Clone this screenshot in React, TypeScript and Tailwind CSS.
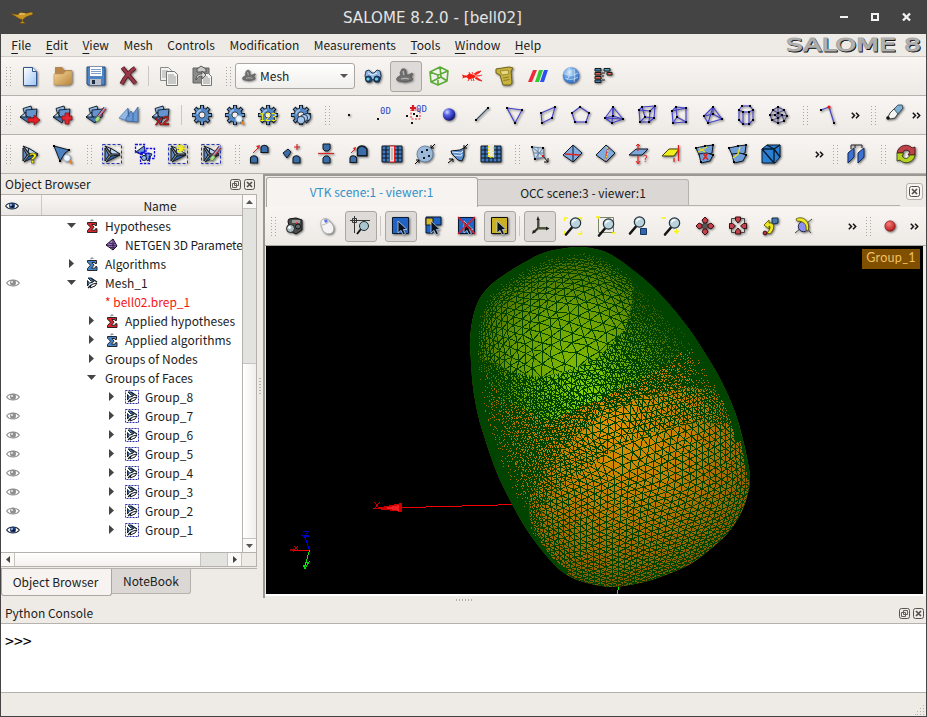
import React from "react";
import type { ReactNode } from "react";

/* ---------- icon primitives (20 x 20 user units) ---------- */

function Ico({ children, shadow = true }: { children: ReactNode; shadow?: boolean }) {
  return (
    <svg
      width="20"
      height="20"
      viewBox="0 0 20 20"
      className={shadow ? "shrink-0 overflow-visible drop-shadow-[1px_1px_1px_rgba(0,0,0,0.55)]" : "shrink-0 overflow-visible"}
      fill="none"
    >
      {children}
    </svg>
  );
}

function Defs() {
  return (
    <svg className="absolute h-0 w-0" aria-hidden="true">
      <defs>
        <linearGradient id="page" x1="0" y1="0" x2="1" y2="1">
          <stop offset="0" stopColor="#ffffff" />
          <stop offset="1" stopColor="#9fc6f3" />
        </linearGradient>
        <linearGradient id="gold" x1="0" y1="0" x2="1" y2="1">
          <stop offset="0" stopColor="#f6d79a" />
          <stop offset="1" stopColor="#b9843a" />
        </linearGradient>
        <radialGradient id="ball" cx=".35" cy=".3" r=".7">
          <stop offset="0" stopColor="#d4dcff" />
          <stop offset=".4" stopColor="#5560e8" />
          <stop offset="1" stopColor="#15157c" />
        </radialGradient>
        <radialGradient id="globe" cx=".4" cy=".3" r=".75">
          <stop offset="0" stopColor="#e0f2ff" />
          <stop offset=".5" stopColor="#5c98dc" />
          <stop offset="1" stopColor="#2c62b4" />
        </radialGradient>
        <radialGradient id="redball" cx=".4" cy=".3" r=".7">
          <stop offset="0" stopColor="#ff7a7a" />
          <stop offset="1" stopColor="#b41c1c" />
        </radialGradient>
      </defs>
    </svg>
  );
}

const K = "#101820";

const MeshBase = () => (
  <g stroke={K} strokeWidth=".9" fill="#6a9bd6" strokeLinejoin="round">
    <path d="M3 3.500L11 1l1 4-7 5z" fill="#8db6e6" />
    <path d="M0 12l6-5v6z" fill="#a5c6ec" />
    <path d="M6 5l11-1-1 8-7 2-3-4z" fill="#6494d0" />
    <path d="M0 12l9 6 2-6H6z" fill="#4677b4" />
  </g>
);

const Arrowhead = () => (
  <g stroke={K} strokeWidth="1" strokeLinejoin="round">
    <path d="M3 2l7 3 8 5-8 0z" fill="#b9d3f0" />
    <path d="M3 4l4 7-4 6z" fill="#5b8cc9" />
    <path d="M18 11L4 18l5-6z" fill="#2f62a8" />
    <path d="M3 2l6 8M9 4l-1 4M7 11l3 0" />
  </g>
);

const Dash = () => <rect x=".5" y=".5" width="19" height="19" stroke="#2438b8" strokeWidth="1" strokeDasharray="3 2" />;

const Gear = () => (
  <>
    <path d="M10 0v20M0 10h20M3 3l14 14M17 3L3 17" stroke={K} strokeWidth="4" />
    <circle cx="10" cy="10" r="7.300" fill={K} />
    <path d="M10 .8v18.400M.8 10h18.400M3.600 3.600l12.800 12.800M16.400 3.600L3.600 16.400" stroke="#6c9bd8" strokeWidth="2" />
    <circle cx="10" cy="10" r="4.900" stroke="#5588c6" strokeWidth="3.600" />
    <path d="M5 9a5 5 0 0 1 4-4" stroke="#9dc0ea" strokeWidth="1.400" />
    <circle cx="10" cy="10" r="3" fill="#f2efea" stroke={K} strokeWidth=".7" />
  </>
);

const Brush = () => (
  <>
    <path d="M19 3L12 12" stroke="#7b2230" strokeWidth="3.600" />
    <path d="M19.500 2.500L12 12" stroke="#8fb6ee" strokeWidth="1.500" />
    <path d="M19 4l-7 9" stroke="#e05560" strokeWidth="1" />
    <ellipse cx="11.500" cy="14" rx="2" ry="3" fill="#a8dc7c" stroke="#4d7a36" strokeWidth=".6" transform="rotate(38 11.500 14)" />
  </>
);

const Lens = () => (
  <>
    <path d="M16 16l3 3.500" stroke="#e88420" strokeWidth="2" />
    <circle cx="14" cy="14" r="3.400" fill="#eef6ff" stroke="#8ea4bc" strokeWidth=".8" />
  </>
);

const Magnifier = ({ x = 0, y = 0 }: { x?: number; y?: number }) => (
  <g transform={`translate(${x} ${y})`}>
    <path d="M9 10.500l-6 7" stroke="#151515" strokeWidth="2.600" strokeLinecap="round" />
    <circle cx="12.500" cy="6" r="5.200" fill="#b9d2dc" stroke="#25333a" strokeWidth="1.200" />
    <path d="M9.500 5.500a3.400 3.400 0 0 1 4-2.400" stroke="#fff" strokeWidth="1.300" />
  </g>
);

const Cursor = () => <path d="M7 5v12l3-2.600 2 4.400 2.400-1-2-4.300H16z" fill="#0a1420" stroke="#b9cdea" strokeWidth=".8" />;

function Wire({ pts, edges, color = "#4340cc" }: { pts: number[][]; edges: number[][]; color?: string }) {
  return (
    <>
      {edges.map(([a, b], i) => (
        <path key={i} d={`M${pts[a][0]} ${pts[a][1]}L${pts[b][0]} ${pts[b][1]}`} stroke={color} strokeWidth="1.100" />
      ))}
      {pts.map((p, i) => (
        <rect key={i} x={p[0] - 1} y={p[1] - 1} width="2" height="2" fill="#000" />
      ))}
    </>
  );
}

const Thumb = () => (
  <g>
    <path
      d="M5 5c0-3 5-3 5 0l0 4 2 0 4-2c2 1 0 3-2 3l2 2c2 1-1 3-3 3l-4 1-6-1c-3 0-3-3-1-4l3-2-1-2z"
      fill="#707070"
      stroke="#4c4c4c"
      strokeWidth=".6"
    />
    <path d="M5 13c3-1 5-1 8 0M7 5l1 4" stroke="#b5b5b5" strokeWidth="1.200" />
  </g>
);

const Column = ({ x, y, s = 1 }: { x: number; y: number; s?: number }) => (
  <path
    transform={`translate(${x} ${y}) scale(${s})`}
    d="M0 8V3C1 0 5 0 7 3v5z"
    fill="#3b6ea8"
    stroke={K}
    strokeWidth="1.100"
  />
);

const Slab = () => <path d="M0 11L10 1l9 8-9 9z" fill="#7fabe0" stroke={K} strokeWidth="1" />;

const Brick = () => (
  <>
    <path d="M0 2h20v16H0z" fill="#3f79c0" stroke={K} />
    <path d="M0 6h20M0 10h20M0 14h20M4 2v16M8 2v16M12 2v16M16 2v16" stroke={K} strokeWidth="1.100" />
  </>
);

const Patch = () => (
  <g fill="#6f9fda" stroke={K} strokeWidth="1">
    <path d="M1 4l9-2 8-1-1 8-12 4z" />
    <path d="M4 10l8-1 6 2-3 6-9 2z" />
    <path d="M0 3h2v2H0zM17 0h2v2h-2zM9 1h2v2H9zM17 10h2v2h-2zM5 17h2v2H5z" fill="#000" stroke="none" />
  </g>
);

const I: Record<string, ReactNode> = {
  new: (
    <Ico>
      <path d="M3.500 1.500h9l4 4v14h-13z" fill="url(#page)" stroke="#30558f" />
      <path d="M12.500 1.500v4h4" fill="#fff" stroke="#30558f" />
    </Ico>
  ),
  open: (
    <Ico>
      <path d="M2 18V1h7l2 3h8v13z" fill="#b88749" />
      <path d="M1 19V8h9l3-3h6v12l-3 2z" fill="url(#gold)" stroke="#b98d54" strokeWidth=".5" />
    </Ico>
  ),
  save: (
    <Ico>
      <path d="M1 1h18v18H2l-1-1z" fill="#4f84c2" stroke="#274f87" />
      <path d="M4 1h12v9H4z" fill="#fff" />
      <path d="M5 3.500h10M5 5.500h10M5 7.500h10" stroke="#7d9fc8" />
      <path d="M4 13h11v6H4z" fill="#b9c0c9" />
      <path d="M6 14h3v4H6z" fill="#1c2a40" />
    </Ico>
  ),
  del: (
    <Ico>
      <path d="M3.500 1.500c3 4 8 10 13 16M16 2C10 6 6 11 2.500 18" stroke="#4c1119" strokeWidth="4.200" />
      <path d="M3.500 1.500c3 4 8 10 13 16M16 2C10 6 6 11 2.500 18" stroke="#973847" strokeWidth="2.800" />
    </Ico>
  ),
  copy: (
    <Ico shadow={false}>
      <path d="M1.500 1.500h8l3 3v10h-11z" fill="#f1f1ef" stroke="#8a8a88" />
      <path d="M3 5h6M3 7h6M3 9h6M3 11h6" stroke="#aaa" />
      <path d="M7.500 5.500h8l3 3v11h-11z" fill="#f6f6f4" stroke="#747472" />
      <path d="M9 9h6M9 11h8M9 13h8M9 15h8M9 17h8" stroke="#999" />
    </Ico>
  ),
  paste: (
    <Ico shadow={false}>
      <path d="M1 2h16v15H1z" fill="#8b8b89" stroke="#626260" />
      <path d="M5 3l4-3 5 3v3H5z" fill="#c9c9c7" stroke="#555" />
      <path d="M9.500 7.500h7l3 3v9h-10z" fill="#f4f4f2" stroke="#747472" />
      <path d="M11 11h5M11 13h7M11 15h7M11 17h7" stroke="#999" />
      <path d="M4 14c0-5 3-6 6-6V5l4 4-4 4v-3c-3 0-4 1-6 4z" fill="#d8d8d6" stroke="#444" strokeWidth=".8" />
    </Ico>
  ),
  thumb: (
    <Ico>
      <Thumb />
    </Ico>
  ),
  bino: (
    <Ico>
      <path d="M3 5l3-1 3 3h2l3-3 3 1 1 5-2 6h-4l-2-3-2 3H4l-2-6z" fill="#8fb4e6" stroke="#152c46" strokeWidth=".9" />
      <circle cx="5.500" cy="13" r="3" fill="#1d4a70" stroke="#152c46" />
      <circle cx="14" cy="13" r="3" fill="#1d4a70" stroke="#152c46" />
      <circle cx="5" cy="13" r="1.600" fill="#6fd0ec" />
      <circle cx="13.500" cy="13" r="1.600" fill="#6fd0ec" />
      <path d="M5 7l4 2 5-2" stroke="#e2eefc" />
    </Ico>
  ),
  cube: (
    <Ico shadow={false}>
      <path
        d="M11 1l8 4-1 10-9 4-7-3-1-10zM1 6l8 3 10-4M9 9v10M11 1l1 10-10 5M12 11l6 4"
        stroke="#5aac36"
        strokeWidth="1.600"
        strokeLinejoin="round"
      />
    </Ico>
  ),
  lobster: (
    <Ico shadow={false}>
      <path d="M0 8.500l3 1h2l2-2 4 1 2 1v2l-3 1-3 1-2-2H3l-3 1 1-1.500z" fill="#f31a12" />
      <path d="M13 10h4l3-1M12 8l3-2 4-1-2 2-4 2M13 12l3 2 4 1-3-2-3-2" fill="#f31a12" stroke="#f31a12" strokeWidth=".8" />
      <path d="M7 13l-1 2M9 13l1 2M11 12l1 3M8 8L7 6M11 8l-1-2" stroke="#f31a12" strokeWidth=".9" />
    </Ico>
  ),
  scroll: (
    <Ico>
      <path d="M1 3l13-2 4 1-2 3 1 12-2 2H8L5 9 1 7z" fill="#c8b33c" stroke="#6f6119" />
      <path d="M5 5l8-1 1 4-7 1z" fill="#e8da80" stroke="#837223" strokeWidth=".7" />
      <path d="M8 12l6-1M8.500 14.500l6-1" stroke="#8c7b25" />
    </Ico>
  ),
  rgb: (
    <Ico shadow={false}>
      <path d="M5 4h4L4 16H0z" fill="#ee2a3c" />
      <path d="M11 4h4l-4 12H7z" fill="#34c832" />
      <path d="M16 4h4l-4 12h-4z" fill="#2a50f0" />
    </Ico>
  ),
  globe: (
    <Ico>
      <circle cx="10" cy="9.500" r="8.300" fill="url(#globe)" />
      <path d="M3 7c4 3 9 3 14 0M6 14c3-4 4-9 2-12M13 16c1-4 1-8 0-13M4 12c5 2 8 2 13-1" stroke="#d4e9fb" strokeWidth=".7" />
    </Ico>
  ),
  tree: (
    <Ico>
      <g stroke="#1c1c1c" strokeWidth="1">
        <path d="M1 2.500h6v2.500H1zM1 14h6v2.500H1z" fill="#3c84b8" />
        <path d="M1 6.500h6v2.500H1zM1 10.500h6v2.500H1z" fill="#e06458" />
        <path d="M10 2.500h6v2.500h-6z" fill="#4fa8c8" />
        <path d="M13 6.500h5v2.500h-5z" fill="#e06458" />
        <path d="M8 10h2M8 14h3M8 7h3" />
      </g>
    </Ico>
  ),
  meshArrow: (
    <Ico>
      <MeshBase />
      <path d="M8 13h6v-3l6 5-6 5v-3H8z" fill="#e21e26" stroke="#7d0d12" strokeWidth=".7" />
    </Ico>
  ),
  meshPlus: (
    <Ico>
      <MeshBase />
      <path d="M12 8h4v3h3v4h-3v4h-4v-4H9v-4h3z" fill="#e32730" stroke="#800d14" strokeWidth=".7" />
    </Ico>
  ),
  meshBrush: (
    <Ico>
      <MeshBase />
      <Brush />
    </Ico>
  ),
  meshTwin: (
    <Ico>
      <path d="M0 13l9-10v13z" fill="#92b8e6" stroke="#4d77b2" strokeWidth=".7" />
      <path d="M7 13l5-7 2 3 5-7v15l-12-1z" fill="#6897d4" stroke="#2f5b9a" strokeWidth=".7" />
      <path d="M9 4l1 8M14 9v7" stroke="#2f5b9a" strokeWidth=".8" />
    </Ico>
  ),
  meshX2: (
    <Ico>
      <MeshBase />
      <text x="3" y="19.500" fill="#c81e1e" stroke="#5a0808" strokeWidth=".4" className="font-['Liberation_Sans'] text-[13px] font-bold">
        x2
      </text>
    </Ico>
  ),
  gear: (
    <Ico>
      <Gear />
    </Ico>
  ),
  gearLens: (
    <Ico>
      <Gear />
      <Lens />
    </Ico>
  ),
  gear123: (
    <Ico>
      <Gear />
      <text x="1" y="15.500" fill="#f6f000" className="font-['DejaVu_Sans_Mono'] text-[10px]">
        123
      </text>
    </Ico>
  ),
  gearBalls: (
    <Ico>
      <Gear />
      <g fill="#a4c6ee" stroke={K} strokeWidth=".8">
        <circle cx="16" cy="12" r="3.600" />
        <circle cx="13" cy="13" r="3.600" />
        <circle cx="10" cy="15" r="3.800" />
      </g>
    </Ico>
  ),
  dot: (
    <Ico>
      <path d="M8 9h2v2H8z" fill="#111" />
    </Ico>
  ),
  dot0D: (
    <Ico shadow={false}>
      <path d="M4 13h2v2H4z" fill="#111" />
      <text x="7" y="9" fill="#2a4cc4" className="font-['DejaVu_Sans_Mono'] text-[9px]">
        0D
      </text>
    </Ico>
  ),
  dots0D: (
    <Ico shadow={false}>
      <path d="M5 5h9v9H5z" stroke="#e8202a" strokeDasharray="2 1.500" />
      <path d="M4 3h6M7 0v6" stroke="#dd1823" strokeWidth="2.200" />
      <path d="M0 10h2v2H0zM7 8h2v2H7zM10 10h2v2h-2zM5 17h2v2H5z" fill="#111" />
      <text x="10" y="6.500" fill="#2a4cc4" className="font-['DejaVu_Sans_Mono'] text-[9px]">
        0D
      </text>
    </Ico>
  ),
  ball: (
    <Ico>
      <circle cx="10" cy="9.500" r="6.200" fill="url(#ball)" />
    </Ico>
  ),
  edge: (
    <Ico>
      <Wire pts={[[4, 15], [16, 3]]} edges={[[0, 1]]} color="#38506c" />
    </Ico>
  ),
  tri: (
    <Ico>
      <Wire pts={[[2, 3], [17, 5], [10, 18]]} edges={[[0, 1], [1, 2], [2, 0]]} />
    </Ico>
  ),
  quad: (
    <Ico>
      <Wire pts={[[3, 8], [17, 2], [14, 13], [4, 18]]} edges={[[0, 1], [1, 2], [2, 3], [3, 0]]} />
    </Ico>
  ),
  penta: (
    <Ico>
      <Wire pts={[[9, 2], [18, 8], [15, 17], [4, 17], [1, 8]]} edges={[[0, 1], [1, 2], [2, 3], [3, 4], [4, 0]]} />
    </Ico>
  ),
  tetra: (
    <Ico>
      <Wire pts={[[9, 2], [1, 13], [8, 18], [19, 14], [9, 11]]} edges={[[0, 1], [0, 2], [0, 3], [1, 2], [2, 3], [1, 3], [0, 4], [4, 1], [4, 3]]} />
    </Ico>
  ),
  hexa: (
    <Ico>
      <Wire
        pts={[[2, 5], [13, 6], [12, 17], [3, 17], [5, 2], [18, 1], [17, 13], [8, 12]]}
        edges={[[0, 1], [1, 2], [2, 3], [3, 0], [4, 5], [5, 6], [6, 7], [7, 4], [0, 4], [1, 5], [2, 6], [3, 7]]}
      />
    </Ico>
  ),
  wedge: (
    <Ico>
      <Wire
        pts={[[2, 6], [16, 3], [16, 17], [3, 18], [6, 2], [7, 12]]}
        edges={[[0, 1], [1, 2], [2, 3], [3, 0], [4, 1], [4, 0], [5, 2], [5, 3], [4, 5]]}
      />
    </Ico>
  ),
  pyra: (
    <Ico>
      <Wire
        pts={[[10, 2], [1, 11], [5, 18], [19, 14], [10, 9]]}
        edges={[[0, 1], [0, 2], [0, 3], [0, 4], [1, 2], [2, 3], [3, 4], [4, 1]]}
      />
    </Ico>
  ),
  prism: (
    <Ico>
      <Wire
        pts={[[6, 1], [14, 1], [17, 5], [3, 5], [7, 7], [13, 7], [3, 15], [17, 15], [7, 19], [13, 19]]}
        edges={[[0, 1], [1, 2], [2, 5], [5, 4], [4, 3], [3, 0], [3, 6], [2, 7], [4, 8], [5, 9], [6, 8], [8, 9], [9, 7]]}
      />
    </Ico>
  ),
  poly: (
    <Ico>
      <Wire
        pts={[[9, 2], [15, 5], [18, 11], [15, 16], [9, 18], [3, 15], [1, 10], [4, 5], [9, 8], [9, 13], [13, 10], [6, 10]]}
        edges={[[0, 1], [1, 2], [2, 3], [3, 4], [4, 5], [5, 6], [6, 7], [7, 0], [0, 8], [8, 9], [9, 4], [7, 8], [8, 10], [10, 2], [9, 5], [9, 10], [6, 11], [1, 8], [10, 3], [11, 8], [11, 9]]}
        color="#55538f"
      />
    </Ico>
  ),
  angle: (
    <Ico>
      <Wire pts={[[3, 5], [11, 2], [16, 18]]} edges={[[0, 1], [1, 2]]} />
      <circle cx="11" cy="2" r="1.600" fill="#ee1414" />
    </Ico>
  ),
  eraser: (
    <Ico>
      <path d="M5 8l5-5 4 4-4 6-5 1-2-2z" fill="#f4f4f0" stroke="#333" strokeWidth=".9" />
      <path d="M9 4l4-4 4 0 1 3-5 6z" fill="#7fb0d2" stroke="#23424f" strokeWidth=".8" />
      <circle cx="3" cy="13" r="1.800" fill="#111" />
    </Ico>
  ),
  meshQ: (
    <Ico>
      <Arrowhead />
      <text x="9" y="18.500" fill="#f5f014" stroke="#4a4700" strokeWidth=".5" className="font-['DejaVu_Sans'] text-[14px] font-bold">
        ?
      </text>
    </Ico>
  ),
  triLens: (
    <Ico>
      <path d="M1 2l15 4-4 3-5 8z" fill="#4d80bf" stroke={K} />
      <path d="M0 1h2v2H0zM15 5h2v2h-2zM6 16h2v2H6z" fill="#000" />
      <Lens />
    </Ico>
  ),
  grp: (
    <Ico>
      <Dash />
      <Arrowhead />
    </Ico>
  ),
  grpMulti: (
    <Ico shadow={false}>
      <path d="M1 8l8-6 1 4-3 5zM8 13l4-4 5 1-4 7z" fill="#6f9ed8" stroke={K} strokeWidth="1" />
      <path d="M.5.500h9v8h-9zM5.500 9.500h9v10h-9zM11 4.500h8.500v10H11z" stroke="#1212e0" strokeWidth="1.300" strokeDasharray="2.500 1.200" />
      <circle cx="9" cy="14" r="2.500" stroke={K} fill="#8db6e6" />
    </Ico>
  ),
  grpStar: (
    <Ico>
      <Dash />
      <Arrowhead />
      <path d="M13 0v9M8.500 4.500h9M10 1l6 7M16 1l-6 7" stroke="#f3ee1c" strokeWidth="1.300" />
    </Ico>
  ),
  grpBrush: (
    <Ico>
      <Dash />
      <Arrowhead />
      <Brush />
    </Ico>
  ),
  moveCol: (
    <Ico>
      <Column x={0.5} y={11} />
      <Column x={11} y={0.5} />
      <path d="M3 9l6-6" stroke="#d62424" />
      <path d="M10 1l-1 4-3-3z" fill="#d62424" />
    </Ico>
  ),
  rotCol: (
    <Ico>
      <path d="M0 9l5-4 3 3-4 6z" fill="#3b6ea8" stroke={K} />
      <Column x={10} y={11} />
      <path d="M14 0v6M11 3h6" stroke="#d62424" strokeWidth="1.100" />
    </Ico>
  ),
  mirror: (
    <Ico>
      <path d="M7 0h7v5l-2 2H9L7 5zM7 19h7v-5l-2-2H9l-2 2z" fill="#3b6ea8" stroke={K} />
      <path d="M2 9.500h16" stroke="#d62424" strokeWidth="1.200" />
    </Ico>
  ),
  scaleCol: (
    <Ico>
      <Column x={1} y={11} s={0.95} />
      <Column x={8.5} y={1} s={1.35} />
      <path d="M2 9l4-4" stroke="#d62424" />
      <path d="M7 3l-1 4-2-3z" fill="#d62424" />
    </Ico>
  ),
  sew: (
    <Ico>
      <Brick />
      <path d="M7.500 2h5v16h-5z" fill="#e9ded8" stroke="#e52020" />
      <path d="M10 4v12" stroke="#777" strokeWidth=".6" />
    </Ico>
  ),
  sphereDots: (
    <Ico>
      <circle cx="10" cy="10" r="8" fill="#9eb9d8" stroke="#4f7196" strokeWidth=".7" />
      <path d="M6 7h2v2H6zM11 5h2v2h-2zM13 11h2v2h-2zM8 13h2v2H8z" fill="#0c1c30" />
      <path d="M20 0l-4 4m0-3v3h3M0 20l4-4m-3 0h3v3" stroke="#000" />
    </Ico>
  ),
  slabs: (
    <Ico>
      <path d="M3 7l9-1 4-2v8l-2 5-4-1-6-6z" fill="#5c8fce" stroke={K} />
      <path d="M4 8l9 1 2-2M6 11l7 1 1-2" stroke="#dce9f8" />
      <path d="M20 0l-4 4m0-3v3h3M0 19l5-4m-4 0h4v3" stroke="#000" />
    </Ico>
  ),
  brickCut: (
    <Ico>
      <Brick />
      <path d="M7 1h6v12H7z" fill="#ece9e4" />
      <path d="M7.500 2v11h5V2" stroke="#ece01c" strokeWidth="1.400" strokeDasharray="2 1" />
    </Ico>
  ),
  quadNet: (
    <Ico>
      <path d="M2 3l11 1 1 9-9 2zM2 3l12 10M13 4L5 15M4 9l9 0M8 3v12" stroke="#64819f" fill="#cddae8" />
      <path d="M1 2h2v2H1zM12 3h2v2h-2zM4 14h2v2H4z" fill="#000" />
      <path d="M13 12l5 6m0-4v4h-4" stroke="#111" />
      <path d="M12 11h2v2h-2z" fill="#e01515" />
    </Ico>
  ),
  slabDiag: (
    <Ico>
      <Slab />
      <path d="M10 1v17" stroke={K} />
      <path d="M2 10l15 1" stroke="#e22020" strokeWidth="1.600" />
    </Ico>
  ),
  slabDash: (
    <Ico>
      <Slab />
      <path d="M12 4l-3 13" stroke="#e22020" strokeWidth="1.400" />
      <path d="M11 3l1 5-3 8" stroke="#f0e41c" strokeWidth="1.200" strokeDasharray="2 1" />
    </Ico>
  ),
  planeQ: (
    <Ico>
      <path d="M0 11l7-6h12l-6 6z" fill="#7ba7dc" stroke={K} />
      <path d="M9 0v7M9 12v8" stroke="#e22020" strokeWidth="1.200" />
      <path d="M7 2l2-2 2 2M7 17l2 3 2-3" stroke="#e22020" />
      <text x="14" y="18" fill="#e22020" className="font-['DejaVu_Sans'] text-[9px]">
        ?
      </text>
    </Ico>
  ),
  planeY: (
    <Ico>
      <path d="M0 12l7-7h10l-5 7z" fill="#f2ee1c" stroke="#444207" />
      <path d="M16.500 1v16M12 14v4" stroke="#e22020" strokeWidth="1.300" />
    </Ico>
  ),
  patchX: (
    <Ico>
      <Patch />
      <path d="M8 9l5 7M13 9l-5 7" stroke="#d62020" strokeWidth="1.300" />
      <path d="M3 8l9-5M4 4l6 4" stroke="#ece01c" strokeWidth="1.200" />
    </Ico>
  ),
  patch: (
    <Ico>
      <Patch />
      <path d="M12 3l-2 7-5 4" stroke="#ece01c" strokeWidth="1.300" />
    </Ico>
  ),
  box: (
    <Ico>
      <path d="M1 5l5-4 13 0v12l-5 6H1z" fill="#2b7fd0" stroke="#091c33" />
      <path d="M1 5h12l6-4M13 5v14M1 5l12 14M6 1l7 4M13 5l6 8" stroke="#091c33" strokeWidth="1.400" />
    </Ico>
  ),
  gate: (
    <Ico>
      <path d="M1 9l6-5v9l-6 6zM11 9l6-5v9l-6 6z" fill="#3f72d0" stroke="#102a60" />
      <path d="M4 5V1h11v3M8 1v3" stroke="#222" />
    </Ico>
  ),
  refresh: (
    <Ico>
      <path d="M1 9C2 1 12-1 16 4l3-1v8h-7l2-3C11 5 8 6 6 9z" fill="#bc4248" stroke="#3c0e10" strokeWidth=".8" />
      <path d="M19 11C18 19 8 21 4 16l-3 1v-8h7l-2 3c3 4 6 3 8-1z" fill="#b6cf20" stroke="#2f3a08" strokeWidth=".8" />
    </Ico>
  ),
  camera: (
    <Ico>
      <path d="M3 5l1-2 7-1 6 2v10l-6 4-6-3z" fill="#4b4b4b" stroke="#111" />
      <path d="M7 4h8v3H7z" fill="#9a9a9a" />
      <circle cx="12" cy="7" r="1" fill="#e33" />
      <circle cx="5.500" cy="12.500" r="4" fill="#a7bcc0" stroke="#222" />
      <circle cx="13" cy="10.500" r="2.500" fill="#5f6d72" stroke="#111" />
      <circle cx="4.500" cy="11.500" r="1.400" fill="#fff" />
    </Ico>
  ),
  mouse: (
    <Ico>
      <path d="M4 4c3-3 6-1 8 2 4 3 5 8 2 11-4 2-9 0-10-5-1-3-2-6 0-8z" fill="#f4f4f4" stroke="#a5a5a5" strokeWidth=".8" />
      <path d="M4 9c2 0 6-2 8-4M8 6L6 3" stroke="#aaa" strokeWidth=".8" />
      <circle cx="8" cy="5" r="1.700" fill="#5570e8" />
    </Ico>
  ),
  axisLens: (
    <Ico shadow={false}>
      <path d="M-1 4.500h20M3.500 0v17M1.500 2.500h4v4h-4z" stroke="#333" />
      <path d="M10 13l-4 5" stroke="#111" strokeWidth="2" />
      <circle cx="13" cy="10" r="4.500" fill="#a9c6cf" stroke="#1d2b30" />
    </Ico>
  ),
  selBlue: (
    <Ico>
      <path d="M1.500 1.500h16v16h-16z" fill="#1f63c4" stroke="#0a1a33" />
      <Cursor />
    </Ico>
  ),
  selMix: (
    <Ico>
      <path d="M2 1h15v8H9v8H2z" fill="#1f63c4" stroke="#0a1a33" />
      <path d="M2 2h7v7H2z" fill="#d8b722" stroke="#0a1a33" />
      <Cursor />
    </Ico>
  ),
  selX: (
    <Ico>
      <path d="M1.500 1.500h16v16h-16z" fill="#1f63c4" stroke="#0a1a33" />
      <Cursor />
      <path d="M1 1l17 17M18 1L1 18" stroke="#de1d31" strokeWidth="1.500" />
    </Ico>
  ),
  selYellow: (
    <Ico>
      <path d="M1.500 1.500h16v16h-16z" fill="#cab022" stroke="#0f0e08" />
      <Cursor />
    </Ico>
  ),
  trihedron: (
    <Ico shadow={false}>
      <path d="M8.500 3v9L4 16M8.500 12.500H17" stroke="#777a5d" strokeWidth="2.400" />
      <path d="M8 3v9L4 16M9 12h8" stroke="#1d211d" strokeWidth="1.100" />
      <path d="M6.500 4l1.500-4 1.500 4zM16 10.500l3.500 2-3.500 2zM3 14l-1 4 4-2z" fill="#1d211d" />
    </Ico>
  ),
  zoomFit: (
    <Ico shadow={false}>
      <path d="M1.500 5V2H5M15 2h3.500v3M1.500 15v3H5M18.500 15v3H15" stroke="#fbf314" strokeWidth="1.400" />
      <Magnifier y={1} />
    </Ico>
  ),
  zoomBox: (
    <Ico shadow={false}>
      <path d="M2.500 1.500h15v15h-15z" stroke="#7c8568" />
      <Magnifier y={2} />
      <path d="M0 1h4M2 0v3M16 17h4" stroke="#fbf314" strokeWidth="1.500" />
    </Ico>
  ),
  zoomSel: (
    <Ico shadow={false}>
      <Magnifier x={-2} />
      <path d="M11.500 12.500h6v6h-6z" fill="#2f67b0" stroke="#17345c" />
    </Ico>
  ),
  zoomPm: (
    <Ico shadow={false}>
      <Magnifier x={0} y={1} />
      <path d="M-1 2h5M12 15.500h5M14.500 13v5" stroke="#fbf314" strokeWidth="1.500" />
    </Ico>
  ),
  pan: (
    <Ico>
      <path d="M5 10h10M10 5v10" stroke="#555" strokeWidth="4" />
      <g fill="#c4404a" stroke="#3b1014" strokeWidth="1">
        <path d="M10 1l3 3-1.500 3h-3L7 4zM10 19l3-3-1.500-3h-3L7 16zM1 10l3-3 3 1.500v3L4 13zM19 10l-3-3-3 1.500v3l3 1.500z" />
      </g>
    </Ico>
  ),
  panIn: (
    <Ico>
      <path d="M3.500 2.500h13v14h-13z" stroke="#444" />
      <g fill="#c4404a" stroke="#3b1014" strokeWidth="1">
        <path d="M7.500 1h5v3L10 7 7.500 4zM7.500 18h5v-3L10 12l-2.500 3zM1.500 7.500v5h3L7.500 10l-3-2.500zM18.500 7.500v5h-3l-3-2.500 3-2.500z" />
      </g>
    </Ico>
  ),
  rotate: (
    <Ico>
      <path d="M11 2h6v5l-4 1-2-1z" fill="#4979aa" stroke="#17314c" />
      <path d="M3 9l5-5v3c5-1 7 5 1 11l-3-1c3-3 4-7 2-7v3z" fill="#efe81c" stroke="#4a4700" strokeWidth=".8" />
      <circle cx="4" cy="17" r="1.900" fill="#c3333c" stroke="#3b1014" />
    </Ico>
  ),
  orbit: (
    <Ico>
      <path d="M1 17L18 3M5 4l12 13" stroke="#444" />
      <circle cx="9.500" cy="10.500" r="5.200" fill="#8a8ff0" stroke="#25264e" />
      <path d="M2 3c7-4 15 3 12 12l-2-1c1-6-3-9-9-9z" fill="#f2ea20" stroke="#4f4b05" strokeWidth=".8" />
    </Ico>
  ),
  rec: (
    <Ico>
      <circle cx="10" cy="10" r="5.200" fill="url(#redball)" stroke="#7d1717" strokeWidth=".6" />
    </Ico>
  ),
};

/* ---------- toolbar parts ---------- */

function Btn({ name, on = false }: { name: string; on?: boolean }) {
  return (
    <div
      className={
        on
          ? "mx-[0.5px] flex h-[31px] w-8 shrink-0 items-center justify-center rounded-[3px] border border-[#aaa6a1] bg-[#dddad7]"
          : "flex h-[31px] w-[33px] shrink-0 items-center justify-center"
      }
    >
      {I[name]}
    </div>
  );
}

function Dots() {
  return (
    <div className="grid grid-cols-2 gap-x-[3px] gap-y-[2px]">
      {Array.from({ length: 14 }, (_, i) => (
        <span key={i} className="h-px w-px bg-[#aaa6a1]" />
      ))}
    </div>
  );
}

const Handle = ({ first = false }: { first?: boolean }) => (
  <div className={first ? "flex w-3 shrink-0 pl-[5px]" : "flex w-4 shrink-0 pl-2"}>
    <Dots />
  </div>
);

const Sep = () => (
  <div className="flex w-[7px] shrink-0 justify-center">
    <span className="h-5 w-px bg-[#cbc8c4]" />
  </div>
);

const More = () => (
  <svg width="9" height="7" viewBox="0 0 9 7" className="shrink-0" fill="none" stroke="#111" strokeWidth="1.500">
    <path d="M.8.800l2.700 2.700L.8 6.200M5 .800l2.700 2.700L5 6.200" />
  </svg>
);

const barCls = "flex h-[39px] shrink-0 items-center border-b border-[#b5b1ad] bg-linear-to-b from-[#f8f5f2] to-[#edeae6]";

const Group = ({ names }: { names: string[] }) => (
  <>
    {names.map((n) => (
      <Btn key={n} name={n} />
    ))}
  </>
);

/* ---------- dock title buttons ---------- */

const FloatBtn = () => (
  <svg width="11" height="11" viewBox="0 0 11 11" fill="none" stroke="#55534f">
    <rect x=".5" y=".5" width="10" height="10" rx="2" />
    <path d="M4.500 2.500h4v4h-4zM2.500 4.500h4v4h-4z" strokeWidth=".9" />
  </svg>
);

const CloseBtn = () => (
  <svg width="11" height="11" viewBox="0 0 11 11" fill="none" stroke="#55534f">
    <rect x=".5" y=".5" width="10" height="10" rx="2" />
    <path d="M3 3l5 5M8 3l-5 5" strokeWidth="1.700" />
  </svg>
);

/* ---------- object tree ---------- */

const Eye = ({ on }: { on: boolean }) => (
  <svg width="14" height="10" viewBox="0 0 14 10" fill="none" className="shrink-0">
    <path d="M.6 5C3.500 1 10.500 1 13.400 5 10.500 9 3.500 9 .6 5z" fill="#fff" stroke={on ? "#222c3a" : "#8f8f8f"} strokeWidth="1.100" />
    <circle cx="7" cy="4.800" r="3" fill={on ? "#1e3c78" : "#8f8f8f"} />
    <circle cx="6" cy="4" r="1.100" fill={on ? "#a7c4f5" : "#e8e8e8"} />
    {on && <circle cx="7.500" cy="5.500" r="1.100" fill="#05080f" />}
  </svg>
);

const Sigma = ({ fill }: { fill: string }) => (
  <svg width="13" height="14" viewBox="0 0 13 14" fill="none">
    <path d="M5 2.500V1h2v1" stroke="#666" strokeWidth=".8" />
    <path d="M1.500 3.500h9v3H9L8.500 5.500H6l2 2.700-2.500 3h3.500l.5-1.500H11v3.800H1.500v-2l3-3.300-3-3z" fill={fill} stroke="#161616" strokeWidth=".9" />
  </svg>
);

const MiniMesh = ({ dashed = false }: { dashed?: boolean }) => (
  <svg width="14" height="14" viewBox="0 0 14 14" fill="none">
    {dashed && <rect x=".5" y=".5" width="13" height="13" stroke="#2b2fa8" strokeDasharray="2 1" />}
    <path d="M3 2l3 0 3 3.500-3-.500z" fill="#3f86cf" stroke={K} strokeWidth=".9" />
    <path d="M2.500 4.500l2 2.500-2 3z" fill="#3f86cf" stroke={K} strokeWidth=".9" />
    <path d="M8 8l4-1-2 3-5 2 1-3z" fill="#fff" stroke={K} strokeWidth="1" />
    <path d="M6 2l6 4M5 7l3-1M3 12l3-3" stroke={K} strokeWidth="1.100" />
  </svg>
);

const Pyramid = () => (
  <svg width="14" height="13" viewBox="0 0 14 13" fill="none">
    <path d="M1 7l7-6 4 7-4 4z" fill="#a67ad8" stroke="#1a1024" />
    <path d="M8 1v11M1 7l11 1M4 5l4 1 3-.5M5 9l3 1 2-1" stroke="#1a1024" strokeWidth=".8" />
  </svg>
);

type Row = {
  label: string;
  pad: number;
  open?: boolean;
  closed?: boolean;
  icon?: ReactNode;
  eye?: "on" | "off";
  red?: boolean;
  tight?: boolean;
};

const groupRows: Row[] = [8, 7, 6, 5, 4, 3, 2, 1].map((n) => ({
  label: `Group_${n}`,
  pad: 104,
  closed: true,
  icon: <MiniMesh dashed />,
  eye: n === 1 ? "on" : "off",
}));

const rows: Row[] = [
  { label: "Hypotheses", pad: 64, open: true, icon: <Sigma fill="#d8262c" /> },
  { label: "NETGEN 3D Paramete", pad: 84, icon: <Pyramid />, tight: true },
  { label: "Algorithms", pad: 64, closed: true, icon: <Sigma fill="#4585cc" /> },
  { label: "Mesh_1", pad: 64, open: true, icon: <MiniMesh />, eye: "off" },
  { label: "* bell02.brep_1", pad: 84, red: true },
  { label: "Applied hypotheses", pad: 84, closed: true, icon: <Sigma fill="#d8262c" /> },
  { label: "Applied algorithms", pad: 84, closed: true, icon: <Sigma fill="#4585cc" /> },
  { label: "Groups of Nodes", pad: 84, closed: true },
  { label: "Groups of Faces", pad: 84, open: true },
  ...groupRows,
];

function TreeRow({ r }: { r: Row }) {
  const gap = r.red ? "ml-[20px] text-[#f51414]" : r.icon ? "ml-[6px]" : "ml-[7px]";
  return (
    <div className="flex h-[19px] items-center whitespace-nowrap">
      <div className="flex w-[22px] shrink-0 pl-[5px]">{r.eye && <Eye on={r.eye === "on"} />}</div>
      <div className="flex shrink-0 items-center" style={{ marginLeft: r.pad - 22 }}>
        {!r.red && (
          <span className="flex w-[13px] shrink-0 justify-center">
            {r.open && (
              <svg width="9" height="5">
                <path d="M0 0h9L4.500 5z" fill="#444" />
              </svg>
            )}
            {r.closed && (
              <svg width="5" height="9">
                <path d="M0 0v9l5-4.500z" fill="#444" />
              </svg>
            )}
          </span>
        )}
        {r.icon && <span className="ml-[7px] flex w-[14px] shrink-0 justify-center">{r.icon}</span>}
        <span className={r.tight ? "ml-[6px] tracking-[-0.15px]" : gap}>{r.label}</span>
      </div>
    </div>
  );
}

/* ---------- VTK scene ---------- */

const hull: [number, number][] = [
  [470, 340], [473, 317], [480, 298], [493, 283], [510, 271], [527, 261], [543, 253], [560, 249], [580, 247], [600, 250],
  [615, 257], [633, 270], [650, 284], [670, 305], [690, 330], [703, 350], [717, 373], [727, 393], [736, 415], [743, 440],
  [748, 463], [750, 480], [747, 497], [740, 515], [727, 534], [707, 552], [687, 566], [660, 577], [640, 583], [613, 587],
  [587, 583], [567, 575], [550, 560], [527, 530], [510, 500], [497, 473], [487, 445], [478, 415], [473, 387], [471, 363],
];

/* Catmull-Rom resampling rounds the corners of the control polygon */
const outline: [number, number][] = hull.flatMap((_, i) => {
  const n = hull.length;
  const [p0, p1, p2, p3] = [hull[(i + n - 1) % n], hull[i], hull[(i + 1) % n], hull[(i + 2) % n]];
  return [0, 0.25, 0.5, 0.75].map((t) => {
    const f = (k: 0 | 1) =>
      0.5 *
      (2 * p1[k] +
        (p2[k] - p0[k]) * t +
        (2 * p0[k] - 5 * p1[k] + 4 * p2[k] - p3[k]) * t * t +
        (3 * p1[k] - p0[k] - 3 * p2[k] + p3[k]) * t * t * t);
    return [f(0), f(1)] as [number, number];
  });
});

const outlineD = "M" + outline.map((p) => p[0].toFixed(1) + " " + p[1].toFixed(1)).join("L") + "Z";

/* distance from (cx, cy) to the silhouette in the direction given */
function reach(cx: number, cy: number, dx: number, dy: number) {
  let best = 1e9;
  for (let i = 0; i < outline.length; i++) {
    const [ax, ay] = outline[i];
    const [bx, by] = outline[(i + 1) % outline.length];
    const ex = bx - ax;
    const ey = by - ay;
    const den = dx * ey - dy * ex;
    if (Math.abs(den) < 1e-9) continue;
    const t = ((ax - cx) * ey - (ay - cy) * ex) / den;
    const u = ((ax - cx) * dy - (ay - cy) * dx) / den;
    if (t > 0 && u >= 0 && u <= 1 && t < best) best = t;
  }
  return best;
}

type Lattice = { cx: number; cy: number; step: number; cap: number; jitter: number; tilt: number; tanh?: boolean; over?: number };

/* triangulated lattice, foreshortened towards the silhouette */
function lattice({ cx, cy, step, cap, jitter, tilt, tanh = false, over = 1 }: Lattice) {
  let seed = 7;
  const rnd = () => {
    seed = (seed * 16807) % 2147483647;
    return seed / 2147483647 - 0.5;
  };
  const lim = tanh ? 2.3 : 1.55;
  const n = Math.ceil(lim / step);
  const grid: (string | null)[][] = [];
  for (let j = -n; j <= n; j++) {
    const line: (string | null)[] = [];
    for (let i = -n; i <= n; i++) {
      const u0 = (i + rnd() * jitter) * step;
      const v0 = (j + (i & 1 ? 0.5 : 0) + rnd() * jitter) * step;
      const u = u0 * Math.cos(tilt) - v0 * Math.sin(tilt);
      const v = u0 * Math.sin(tilt) + v0 * Math.cos(tilt);
      const t = Math.hypot(u, v);
      if (t > lim) {
        line.push(null);
        continue;
      }
      const dx = t ? u / t : 1;
      const dy = t ? v / t : 0;
      const r = Math.min(reach(cx, cy, dx, dy) * over, cap) * (tanh ? Math.tanh(t) : Math.sin(t));
      line.push((cx + dx * r).toFixed(1) + " " + (cy + dy * r).toFixed(1));
    }
    grid.push(line);
  }
  const out: string[] = [];
  const seg = (a: string | null | undefined, b: string | null | undefined) => {
    if (a && b) out.push("M" + a + "L" + b);
  };
  for (let j = 0; j < grid.length; j++) {
    for (let i = 0; i < grid.length; i++) {
      const odd = (i - n) & 1;
      seg(grid[j][i], grid[j][i + 1]);
      seg(grid[j][i], grid[j + 1]?.[i]);
      if (odd) {
        seg(grid[j][i], grid[j + 1]?.[i + 1]);
      } else {
        seg(grid[j + 1]?.[i], grid[j][i + 1]);
      }
    }
  }
  return out.join("");
}

const capMesh = lattice({ cx: 562, cy: 350, step: 0.105, cap: 118, jitter: 0.3, tilt: -0.12, tanh: true });
const bodyMesh = lattice({ cx: 622, cy: 475, step: 0.055, cap: 175, jitter: 0.12, tilt: 0.04, over: 1.12 });
const midMesh = lattice({ cx: 620, cy: 450, step: 0.042, cap: 175, jitter: 0.4, tilt: 0.1, over: 1.05 });
const bandMesh = lattice({ cx: 600, cy: 405, step: 0.032, cap: 400, jitter: 0.7, tilt: 0.3 });

const capD = "M460 350L493 363L505 369L517 373L540 377L560 373L580 366L600 356L613 342L625 329L630 312L633 297L634 285L628 268L610 230H460Z";
const orangeD =
  "M460 366L483 370L495 388L503 400L520 408L537 415L545 420L556 419L573 410L600 400L620 388L643 378L667 365L682 352L700 342L770 346V600H460Z";
const midD = "M572 440L600 416L640 398L690 388L728 392L770 395V600H535L528 540L530 500L548 470Z";
const bodyD = "M588 468L622 444L660 430L700 422L760 428V600H546L540 540L542 505L562 485Z";

function Scene() {
  return (
    <svg width="657" height="348" viewBox="266 246 657 348" className="block bg-black" shapeRendering="crispEdges">
      <defs>
        <clipPath id="hull">
          <path d={outlineD} />
        </clipPath>
        <clipPath id="capClip">
          <path d={capD} />
        </clipPath>
        <clipPath id="bodyClip">
          <path d={bodyD} />
        </clipPath>
        <clipPath id="midClip">
          <path clipRule="evenodd" d={midD + bodyD} />
        </clipPath>
        <clipPath id="bandClip">
          <path clipRule="evenodd" d={"M440 230H780V610H440Z" + capD + midD} />
        </clipPath>
        <radialGradient id="capFill" gradientUnits="userSpaceOnUse" cx="575" cy="365" r="130">
          <stop offset="0" stopColor="#80b800" />
          <stop offset=".45" stopColor="#6c9c00" />
          <stop offset="1" stopColor="#3d5200" />
        </radialGradient>
        <radialGradient id="bandFill" gradientUnits="userSpaceOnUse" cx="585" cy="400" r="130">
          <stop offset="0" stopColor="#88d800" />
          <stop offset=".5" stopColor="#6ca400" />
          <stop offset="1" stopColor="#334800" />
        </radialGradient>
        <radialGradient id="orangeFill" gradientUnits="userSpaceOnUse" cx="615" cy="425" r="185">
          <stop offset="0" stopColor="#e09200" />
          <stop offset=".4" stopColor="#c47e00" />
          <stop offset=".75" stopColor="#9a6400" />
          <stop offset="1" stopColor="#704800" />
        </radialGradient>
      </defs>
      <g stroke="#f00000" fill="none">
        <path d="M402 507.500h24M426 506.500h36M462 505.500h36M498 504.500h20" />
        <path d="M374 502l5 6M380 502l-6 7" strokeWidth=".8" />
        <path d="M373 508.500L402 503v9z" fill="#c80000" stroke="none" />
        <path d="M385 508l14-3v6z" fill="#f02020" stroke="none" />
      </g>
      <path d="M619 586l-2 8" stroke="#00f000" />
      <g clipPath="url(#hull)">
        <path d={outlineD} fill="url(#bandFill)" />
        <path d={capD} fill="url(#capFill)" />
        <path d={orangeD} fill="url(#orangeFill)" />
        <g stroke="#004400" fill="none" strokeWidth="1">
          <path d={capMesh} clipPath="url(#capClip)" />
          <path d={bodyMesh} clipPath="url(#bodyClip)" />
          <path d={midMesh} clipPath="url(#midClip)" />
          <path d={bandMesh} clipPath="url(#bandClip)" />
          <path d="M567 575L550 560L527 530" strokeWidth="6" />
          <path d="M527 530L510 500L497 473L487 445L478 415L473 387L471 363L470 340L473 317" strokeWidth="15" strokeLinejoin="round" />
          <path d="M473 317L480 298L493 283L510 271L543 253L560 249L580 247L600 250" strokeWidth="6" />
          <path d="M600 250L615 257L633 270L650 284L670 305L690 330L703 350L717 373L727 393L736 415L743 440" strokeWidth="14" />
          <path d="M743 440L748 463L750 480" strokeWidth="5" />
        </g>
      </g>
      <g fill="none">
        <path d="M309.500 550l-5-14" stroke="#0000e8" />
        <path d="M301 535h8M303 531h6l-5 5h5" stroke="#0000c0" />
        <path d="M292 550.500h17" stroke="#f00000" />
        <path d="M289 550l5-2v4z" fill="#a00000" />
        <path d="M294 546l4 4M298 546l-4 4" stroke="#c00000" />
        <path d="M309.500 550l-5 18" stroke="#00f000" />
        <path d="M303 565h4l-2 4zM306 561l2 3M310 561l-3 4" stroke="#00e000" />
      </g>
    </svg>
  );
}

/* ---------- menus ---------- */

const menus: [string, boolean][] = [
  ["File", true], ["Edit", true], ["View", true], ["Mesh", false], ["Controls", false],
  ["Modification", false], ["Measurements", false], ["Tools", true], ["Window", true], ["Help", true],
];

export default function App() {
  return (
    <div className="relative flex h-[717px] w-[927px] flex-col overflow-hidden border-x border-b border-[#444] bg-[#eeebe7] font-['Noto_Sans_CJK_SC',sans-serif] text-[12px] leading-[18px] text-[#1c1c1c]">
      <Defs />

      <header className="-mx-px flex h-[34px] shrink-0 items-center bg-[#444]">
        <div className="w-[100px] pl-[9px]">
          <svg width="26" height="16" viewBox="0 0 26 16" fill="none">
            <path d="M1 4.500l8 1 3-2.500 3 1 4 0c5-3 7 2 2 2.500l-4 1.500-3 2.500v2l3 2h-7l3-2v-2C9 10 7 7 1 4.500z" fill="#c89422" stroke="#5a4210" strokeWidth=".6" />
            <path d="M10 5l6 0" stroke="#f5d878" />
          </svg>
        </div>
        <h1 className="flex-1 pt-px text-center font-['DejaVu_Sans'] text-[15.100px] text-[#e4e4e4]">
          <span className="ml-[-75px]">SALOME 8.2.0 - [bell02]</span>
        </h1>
        <svg width="72" height="12" viewBox="0 0 72 12" className="mr-[15px]" fill="none" stroke="#f2f2f2">
          <path d="M0 6h8" strokeWidth="2" />
          <path d="M32 3h6v6h-6z" strokeWidth="2" />
          <path d="M63 2.500l7 7M70 2.500l-7 7" strokeWidth="2.400" />
        </svg>
      </header>

      <nav className="flex h-[23px] shrink-0 items-center justify-between border-b border-[#cfccc8] pl-[3px]">
        <div className="flex pb-px">
          {menus.map(([m, u]) => (
            <span key={m} className="px-[7.250px]">
              {u ? <span className="underline underline-offset-[3px]">{m[0]}</span> : m[0]}
              {m.slice(1)}
            </span>
          ))}
        </div>
        <svg width="140" height="20" className="mr-px">
          <text x="2" y="17" textLength="135" lengthAdjust="spacingAndGlyphs" fill="#111" className="font-['DejaVu_Sans'] text-[17px]" stroke="#111" strokeWidth=".8">
            SALOME 8
          </text>
          <text x="1" y="16" textLength="135" lengthAdjust="spacingAndGlyphs" fill="#bdbdbd" stroke="#a8a8a8" strokeWidth="1" className="font-['DejaVu_Sans'] text-[17px]">
            SALOME 8
          </text>
        </svg>
      </nav>

      <div className={barCls}>
        <Handle first />
        <Group names={["new", "open", "save", "del"]} />
        <Sep />
        <Group names={["copy", "paste"]} />
        <Handle />
        <div className="mr-px ml-px flex h-[26px] w-[120px] items-center rounded-[3px] border border-[#aaa6a1] bg-linear-to-b from-white to-[#f1efec] pr-[6px] pb-px pl-1">
          <span className="flex scale-[.8]">{I.thumb}</span>
          <span className="flex-1">Mesh</span>
          <svg width="8" height="4">
            <path d="M0 0h8L4 4z" fill="#555" />
          </svg>
        </div>
        <Group names={["bino"]} />
        <Btn name="thumb" on />
        <Group names={["cube", "lobster", "scroll", "rgb", "globe", "tree"]} />
      </div>

      <div className={barCls}>
        <Handle first />
        <Group names={["meshArrow", "meshPlus", "meshBrush", "meshTwin", "meshX2"]} />
        <Sep />
        <Group names={["gear", "gearLens", "gear123", "gearBalls"]} />
        <Handle />
        <Group names={["dot", "dot0D", "dots0D", "ball", "edge", "tri", "quad", "penta", "tetra", "hexa", "wedge", "pyra", "prism", "poly"]} />
        <Handle />
        <Group names={["angle"]} />
        <div className="flex w-[22px] shrink-0 justify-center">
          <More />
        </div>
        <Handle first />
        <Group names={["eraser"]} />
        <div className="pl-px">
          <More />
        </div>
      </div>

      <div className={barCls}>
        <Handle first />
        <Group names={["meshQ", "triLens"]} />
        <Handle />
        <Group names={["grp", "grpMulti", "grpStar", "grpBrush"]} />
        <Handle />
        <Group names={["moveCol", "rotCol", "mirror", "scaleCol", "sew", "sphereDots", "slabs", "brickCut"]} />
        <Handle />
        <Group names={["quadNet", "slabDiag", "slabDash", "planeQ", "planeY", "patchX", "patch", "box"]} />
        <div className="flex w-[41px] shrink-0 justify-end pr-1">
          <More />
        </div>
        <Handle first />
        <Group names={["gate"]} />
        <Handle />
        <Group names={["refresh"]} />
      </div>

      <main className="flex h-[424px] shrink-0">
        <aside className="flex w-[256px] shrink-0 flex-col">
          <div className="flex h-5 shrink-0 items-center gap-[3px] pr-[2px] pl-1">
            <span className="flex-1 pb-px">Object Browser</span>
            <FloatBtn />
            <CloseBtn />
          </div>
          <div className="flex h-[359px] shrink-0 border border-l-0 border-[#b5b1ad] bg-white">
            <div className="flex w-[241px] shrink-0 flex-col overflow-hidden">
              <div className="flex h-[21px] shrink-0 items-center border-b border-[#b5b1ad] bg-linear-to-b from-[#f9f7f5] to-[#eae7e4]">
                <div className="flex h-full w-[41px] shrink-0 items-center border-r border-[#ccc8c4] pt-px pl-1">
                  <Eye on />
                </div>
                <div className="w-[236px] shrink-0 pt-[2px] text-center">Name</div>
              </div>
              {rows.map((r) => (
                <TreeRow key={r.label} r={r} />
              ))}
            </div>
            <div className="flex w-[14px] shrink-0 flex-col border-l border-[#b5b1ad] bg-[#e2e2df]">
              <div className="flex h-[14px] shrink-0 items-center justify-center border-b border-[#c6c3bf] bg-[#faf9f8]">
                <svg width="7" height="4">
                  <path d="M0 4h7L3.500 0z" fill="#555" />
                </svg>
              </div>
              <div className="h-[154px] shrink-0" />
              <div className="flex-1 border-y border-[#c6c3bf] bg-linear-to-r from-white to-[#f1efec]" />
              <div className="flex h-[13px] shrink-0 items-center justify-center bg-[#faf9f8]">
                <svg width="7" height="4">
                  <path d="M0 0h7L3.500 4z" fill="#555" />
                </svg>
              </div>
            </div>
          </div>
          <div className="-mt-px flex h-[15px] shrink-0 border border-l-0 border-[#b5b1ad] bg-[#e2e2df]">
            <div className="flex w-[14px] items-center justify-center border-r border-[#c6c3bf] bg-[#faf9f8]">
              <svg width="4" height="7">
                <path d="M4 0v7L0 3.500z" fill="#444" />
              </svg>
            </div>
            <div className="w-[186px] border-r border-[#c6c3bf] bg-linear-to-b from-white to-[#f3f1ee]" />
            <div className="w-[27px] border-r border-[#c6c3bf]" />
            <div className="flex w-[14px] items-center justify-center border-r border-[#c6c3bf] bg-[#faf9f8]">
              <svg width="4" height="7">
                <path d="M0 0v7l4-3.500z" fill="#444" />
              </svg>
            </div>
            <div className="flex-1 bg-[#eeebe7]" />
          </div>
          <div className="mt-px flex h-[28px] shrink-0 items-start border-t border-[#b5b1ad]">
            <div className="flex h-[27px] w-[111px] items-center justify-center rounded-b-[3px] border border-t-0 border-[#aaa6a1] bg-[#f6f3f0] pr-[2px]">Object Browser</div>
            <div className="flex h-[25px] w-[79px] items-center justify-center rounded-br-[3px] border-r border-b border-[#b5b1ad] bg-[#dad7d4]">NoteBook</div>
          </div>
        </aside>

        <div className="flex w-[6px] shrink-0 items-center justify-center">
          <div className="grid gap-[2px]">
            {Array.from({ length: 6 }, (_, i) => (
              <span key={i} className="h-px w-[2px] bg-[#b5b1ad]" />
            ))}
          </div>
        </div>

        <section className="flex w-[663px] shrink-0 flex-col border-t-2 border-l-2 border-[#9b9792] pt-px">
          <div className="flex h-[30px] shrink-0 items-start pl-px">
            <div className="flex h-[30px] w-[212px] shrink-0 items-center justify-center rounded-t-[3px] border border-b-0 border-[#aaa6a1] bg-[#f6f3f0] pr-px pb-px text-[#3590c8]">
              VTK scene:1 - viewer:1
            </div>
            <div className="mt-[2px] flex h-[27px] w-[211px] shrink-0 items-center justify-center rounded-tr-[3px] border border-l-0 border-[#b5b1ad] bg-[#dad7d4] text-[#1c1c1c]">
              OCC scene:3 - viewer:1
            </div>
            <div className="h-[29px] w-[211px] border-b border-[#b5b1ad]" />
            <div className="mt-[6px] ml-[6px] flex h-[17px] w-[17px] items-center justify-center rounded-[3px] border border-[#b5b1ad] bg-[#f6f3f0]">
              <CloseBtn />
            </div>
          </div>
          <div className="flex h-[39px] shrink-0 items-center border-b border-[#aaa6a1] bg-linear-to-b from-[#f8f5f2] to-[#edeae6] pl-px">
            <Handle first />
            <Group names={["camera", "mouse"]} />
            <Btn name="axisLens" on />
            <Sep />
            <Btn name="selBlue" on />
            <Group names={["selMix", "selX"]} />
            <Btn name="selYellow" on />
            <Sep />
            <Btn name="trihedron" on />
            <Group names={["zoomFit", "zoomBox", "zoomSel", "zoomPm", "pan", "panIn", "rotate", "orbit"]} />
            <div className="flex w-[41px] shrink-0 justify-end pr-[4px]">
              <More />
            </div>
            <Handle first />
            <Group names={["rec"]} />
            <div className="pl-[4px]">
              <More />
            </div>
          </div>
          <div className="relative h-[350px] w-[660px] shrink-0 border-b-2 border-white pl-px">
            <Scene />
            <div className="absolute top-[3px] right-[5px] flex h-[20px] w-[58px] items-center justify-center bg-[#805000] pb-[2px] font-['Lato',sans-serif] text-[12.500px] tracking-[0.3px] text-[#f0c060]">
              Group_1
            </div>
          </div>
        </section>
      </main>

      <div className="flex h-[5px] shrink-0 items-start justify-center gap-[2px] pt-px">
        {Array.from({ length: 6 }, (_, i) => (
          <span key={i} className="h-[2px] w-px bg-[#b5b1ad]" />
        ))}
      </div>
      <div className="flex h-[20px] shrink-0 items-center gap-[3px] pr-[2px] pl-1">
        <span className="flex-1 pb-px">Python Console</span>
        <FloatBtn />
        <CloseBtn />
      </div>
      <div className="h-[70px] shrink-0 border-y border-[#b5b1ad] bg-white pt-[7px] pl-[4px] font-['Noto_Sans_CJK_SC',sans-serif] text-[16px] text-black">
        &gt;&gt;&gt;
      </div>
      <footer className="flex flex-1 items-end justify-end">
        <svg width="11" height="11" fill="#b5b1ad">
          <path d="M8 0h1v1H8zM5 3h1v1H5zM8 3h1v1H8zM2 6h1v1H2zM5 6h1v1H5zM8 6h1v1H8zM0 9h1v1H0zM2 9h1v1H2zM5 9h1v1H5zM8 9h1v1H8z" />
        </svg>
      </footer>
    </div>
  );
}
